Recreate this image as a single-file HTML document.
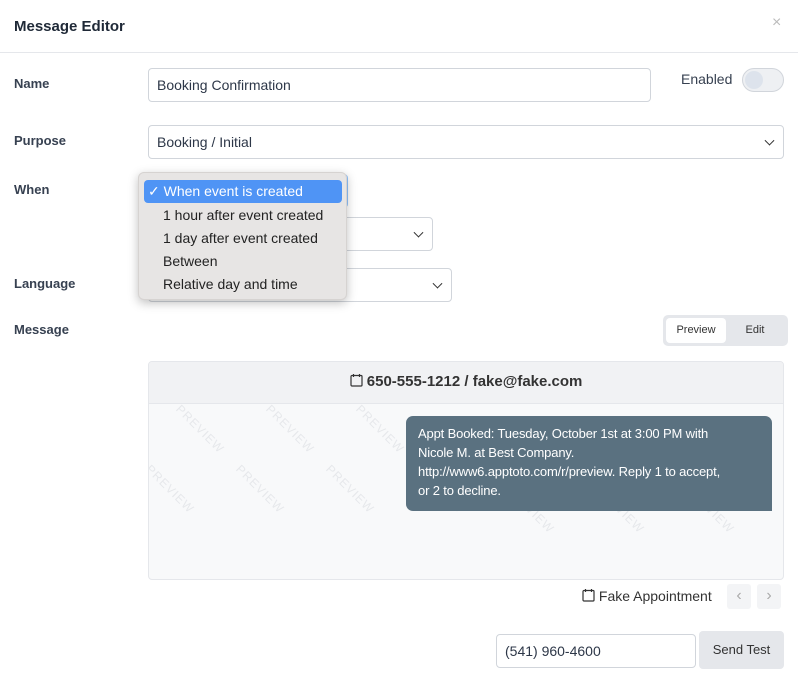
<!DOCTYPE html>
<html><head><style>
*{box-sizing:border-box}
body{margin:0;width:798px;height:678px;background:#fff;font-family:"Liberation Sans",sans-serif;color:#2d3748;position:relative;overflow:hidden}
.a{position:absolute}
.lbl{font-size:13px;font-weight:bold;color:#374151}
.inp{border:1px solid #d1d5db;border-radius:4px;background:#fff;font-size:14px;padding:0 8px;display:flex;align-items:center}
.chev{position:absolute;right:10px;top:50%;width:7px;height:7px;border-right:1.5px solid #333;border-bottom:1.5px solid #333;transform:translateY(-70%) rotate(45deg)}
.wm{position:absolute;font-size:12px;color:#e6e8eb;transform:rotate(45deg);letter-spacing:1px}
</style></head><body>
<div class="a" style="left:14px;top:18px;font-size:15px;font-weight:bold;color:#1f2937">Message Editor</div>
<div class="a" style="left:772px;top:14px;font-size:16px;color:#bbb">×</div>
<div class="a" style="left:0;top:52px;width:798px;height:1px;background:#e5e7eb"></div>

<div class="a lbl" style="left:14px;top:76px">Name</div>
<div class="a inp" style="left:148px;top:68px;width:503px;height:34px">Booking Confirmation</div>
<div class="a" style="left:681px;top:71px;font-size:14px;color:#374151">Enabled</div>
<div class="a" style="left:742px;top:68px;width:42px;height:24px;border-radius:12px;background:#eef0f3;border:1px solid #d1d5db"><div style="position:absolute;left:2px;top:2px;width:18px;height:18px;border-radius:50%;background:#dde3ec"></div></div>

<div class="a lbl" style="left:14px;top:133px">Purpose</div>
<div class="a inp" style="left:148px;top:125px;width:636px;height:34px">Booking / Initial<span class="chev"></span></div>

<div class="a lbl" style="left:14px;top:182px">When</div>
<div class="a inp" style="left:148px;top:174px;width:200px;height:34px;border-color:#93c5fd"></div>
<div class="a inp" style="left:150px;top:217px;width:283px;height:34px"><span class="chev"></span></div>

<div class="a lbl" style="left:14px;top:276px">Language</div>
<div class="a inp" style="left:148px;top:268px;width:304px;height:34px"><span class="chev"></span></div>

<div class="a" style="left:138px;top:172px;width:209px;height:128px;background:#e7e5e4;border-radius:6px;box-shadow:0 3px 10px rgba(0,0,0,.25);border:1px solid #d6d3d1;font-size:14px;color:#222">
 <div style="position:absolute;left:5px;top:7px;width:198px;height:23px;background:#4f94f5;border-radius:4px;color:#fff;padding:3px 0 0 4px">✓ When event is created</div>
 <div style="position:absolute;left:24px;top:34px">1 hour after event created</div>
 <div style="position:absolute;left:24px;top:57px">1 day after event created</div>
 <div style="position:absolute;left:24px;top:80px">Between</div>
 <div style="position:absolute;left:24px;top:103px">Relative day and time</div>
</div>

<div class="a lbl" style="left:14px;top:322px">Message</div>
<div class="a" style="left:663px;top:315px;width:125px;height:31px;background:#e5e7eb;border-radius:5px">
 <div style="position:absolute;left:3px;top:3px;width:60px;height:25px;background:#fff;border-radius:4px;font-size:11px;text-align:center;line-height:25px;color:#333">Preview</div>
 <div style="position:absolute;left:70px;top:3px;width:44px;height:25px;font-size:11px;text-align:center;line-height:25px;color:#333">Edit</div>
</div>

<div class="a" style="left:148px;top:361px;width:636px;height:219px;border:1px solid #e5e7eb;border-radius:4px;background:#f8f9fa;overflow:hidden">
 <div class="wm" style="left:20px;top:60px">PREVIEW</div><div class="wm" style="left:110px;top:60px">PREVIEW</div><div class="wm" style="left:200px;top:60px">PREVIEW</div>
 <div class="wm" style="left:-10px;top:120px">PREVIEW</div><div class="wm" style="left:80px;top:120px">PREVIEW</div><div class="wm" style="left:170px;top:120px">PREVIEW</div><div class="wm" style="left:260px;top:120px">PREVIEW</div><div class="wm" style="left:350px;top:140px">PREVIEW</div><div class="wm" style="left:440px;top:140px">PREVIEW</div><div class="wm" style="left:530px;top:140px">PREVIEW</div>
 <div style="position:absolute;left:0;top:0;width:100%;height:42px;background:#f1f2f4;border-bottom:1px solid #e5e7eb;text-align:center;font-size:15px;font-weight:bold;line-height:40px;color:#333">
  <svg width="13" height="14" viewBox="0 0 13 14" style="vertical-align:-1px"><rect x="1" y="2.5" width="11" height="10.5" rx="1" fill="none" stroke="#333" stroke-width="1.2"/><path d="M3.5 1v3M9.5 1v3" stroke="#333" stroke-width="1.2"/></svg> 650-555-1212 / fake@fake.com</div>
 <div style="position:absolute;left:257px;top:54px;width:366px;height:95px;background:#5a7180;border-radius:7px 7px 0 7px;color:#fff;font-size:13px;line-height:19px;padding:8px 8px 8px 12px;letter-spacing:-0.15px;white-space:nowrap">Appt Booked: Tuesday, October 1st at 3:00 PM with<br>Nicole M. at Best Company.<br>http://www6.apptoto.com/r/preview. Reply 1 to accept,<br>or 2 to decline.</div>
</div>

<div class="a" style="left:582px;top:588px;font-size:14px;color:#333"><svg width="13" height="14" viewBox="0 0 13 14" style="vertical-align:-1px"><rect x="1" y="2.5" width="11" height="10.5" rx="1" fill="none" stroke="#333" stroke-width="1.2"/><path d="M3.5 1v3M9.5 1v3" stroke="#333" stroke-width="1.2"/></svg> Fake Appointment</div>
<div class="a" style="left:727px;top:584px;width:24px;height:25px;background:#f3f4f6;border-radius:3px;color:#aaa;text-align:center;line-height:24px;font-size:16px">‹</div>
<div class="a" style="left:757px;top:584px;width:24px;height:25px;background:#f3f4f6;border-radius:3px;color:#aaa;text-align:center;line-height:24px;font-size:16px">›</div>

<div class="a inp" style="left:496px;top:634px;width:200px;height:34px">(541) 960-4600</div>
<div class="a" style="left:699px;top:631px;width:85px;height:38px;background:#e5e7eb;border-radius:4px;font-size:13px;text-align:center;line-height:38px;color:#333">Send Test</div>
</body></html>
